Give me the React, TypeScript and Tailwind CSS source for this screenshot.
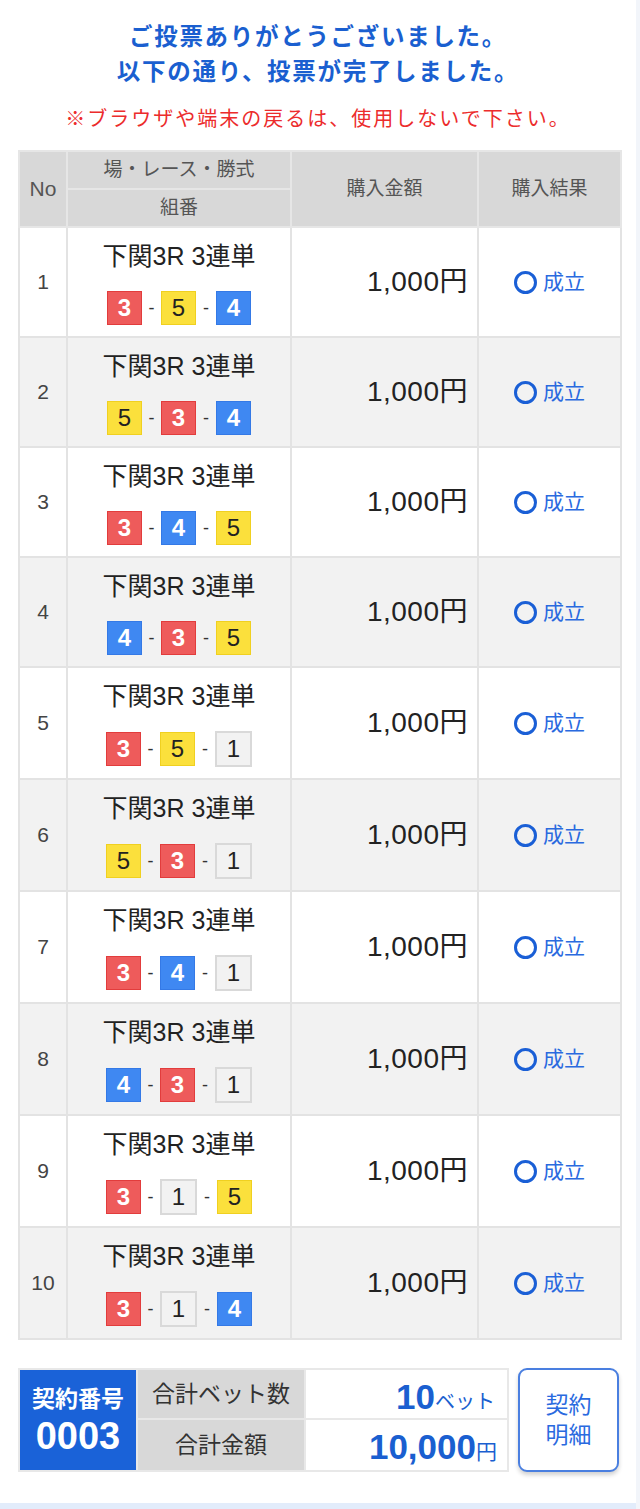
import React from "react";

type Color = 1 | 3 | 4 | 5;

const rows: { combo: Color[] }[] = [
  { combo: [3, 5, 4] },
  { combo: [5, 3, 4] },
  { combo: [3, 4, 5] },
  { combo: [4, 3, 5] },
  { combo: [3, 5, 1] },
  { combo: [5, 3, 1] },
  { combo: [3, 4, 1] },
  { combo: [4, 3, 1] },
  { combo: [3, 1, 5] },
  { combo: [3, 1, 4] },
];

function Box({ n }: { n: Color }) {
  if (n === 3)
    return (
      <span className="inline-flex w-[35px] h-[34px] items-center justify-center bg-[#ee5b5b] border border-[#e23c3c] text-white font-bold text-[24px] leading-none">
        3
      </span>
    );
  if (n === 5)
    return (
      <span className="inline-flex w-[35px] h-[34px] items-center justify-center bg-[#fbe03c] border border-[#f0d020] text-[#222] text-[24px] leading-none">
        5
      </span>
    );
  if (n === 4)
    return (
      <span className="inline-flex w-[35px] h-[34px] items-center justify-center bg-[#3f88f2] border border-[#3479e6] text-white font-bold text-[24px] leading-none">
        4
      </span>
    );
  return (
    <span className="inline-flex w-[37px] h-[36px] items-center justify-center bg-[#f2f2f2] border-2 border-[#d9d9d9] text-[#222] text-[24px] leading-none">
      1
    </span>
  );
}

const th =
  "bg-[#d8d8d8] border-2 border-[#e6e6e6] text-[#555] font-normal text-[19px]";

export default function App() {
  const font = "font-['Liberation_Sans','Noto_Sans_CJK_JP',sans-serif]";
  return (
    <div className={`w-[640px] h-[1509px] bg-white flex ${font}`}>
      <div className="w-[636px] flex flex-col">
        <div className="pt-[20px] text-center text-[#1a5fd0] font-bold text-[23.5px] leading-[35px] tracking-[1.7px]">
          <div>ご投票ありがとうございました。</div>
          <div>以下の通り、投票が完了しました。</div>
        </div>
        <div className="mt-[14px] text-center text-[#ec2c2c] text-[20px] leading-[30px] tracking-[2px]">
          ※ブラウザや端末の戻るは、使用しないで下さい。
        </div>
        <div className="mt-[16px] ml-[18px] w-[602px]">
          <table className="w-[602px] table-fixed border-collapse">
            <colgroup>
              <col className="w-[48px]" />
              <col className="w-[224px]" />
              <col className="w-[187px]" />
              <col className="w-[143px]" />
            </colgroup>
            <thead>
              <tr className="h-[38px]">
                <th rowSpan={2} className={`${th} text-[21px]`}>
                  No
                </th>
                <th className={th}>場・レース・勝式</th>
                <th rowSpan={2} className={th}>
                  購入金額
                </th>
                <th rowSpan={2} className={th}>
                  購入結果
                </th>
              </tr>
              <tr className="h-[38px]">
                <th className={th}>組番</th>
              </tr>
            </thead>
            <tbody>
              {rows.map((r, i) => {
                const even = i % 2 === 1;
                const hasWhite = r.combo.includes(1);
                return (
                  <tr
                    key={i}
                    className={`${even ? "bg-[#f2f2f2]" : "bg-white"} ${
                      hasWhite ? "h-[112px]" : "h-[110px]"
                    }`}
                  >
                    <td className="border-2 border-[#e3e3e3] text-center text-[21px] text-[#444]">
                      {i + 1}
                    </td>
                    <td className="border-2 border-[#e3e3e3] text-center align-top pt-[13px]">
                      <div className="text-[25px] leading-[30px] text-[#222]">
                        下関3R 3連単
                      </div>
                      <div className="mt-[20px] flex items-center justify-center">
                        <Box n={r.combo[0]} />
                        <span className="w-[19px] text-center text-[#333] text-[18px] leading-none">
                          -
                        </span>
                        <Box n={r.combo[1]} />
                        <span className="w-[20px] text-center text-[#333] text-[18px] leading-none">
                          -
                        </span>
                        <Box n={r.combo[2]} />
                      </div>
                    </td>
                    <td className="border-2 border-[#e3e3e3] text-right pr-[9px] text-[28px] tracking-[0.5px] text-[#222]">
                      1,000円
                    </td>
                    <td className="border-2 border-[#e3e3e3]">
                      <div className="flex items-center justify-center gap-[6px]">
                        <span className="inline-block w-[23px] h-[23px] rounded-full border-[3px] border-[#1a5fd6]" />
                        <span className="text-[21px] text-[#2a6adf]">成立</span>
                      </div>
                    </td>
                  </tr>
                );
              })}
            </tbody>
          </table>
        </div>

        <div className="mt-[28px] ml-[18px] flex items-stretch h-[104px]">
          <div className="flex border-2 border-[#e8e8e8]">
            <div className="w-[116px] bg-[#1a62d8] flex flex-col items-center justify-center text-white font-bold">
              <div className="text-[23px] leading-[32px]">契約番号</div>
              <div className="text-[38px] leading-[42px]">0003</div>
            </div>
            <div className="flex flex-col">
              <div className="flex h-[50px] border-b-2 border-[#e8e8e8]">
                <div className="w-[170px] bg-[#d8d8d8] border-x-2 border-[#e8e8e8] flex items-center justify-center text-[23px] text-[#333]">
                  合計ベット数
                </div>
                <div className="w-[201px] bg-white flex items-baseline justify-end pr-[12px] pt-[9px] text-[#1a5fd0]">
                  <span className="text-[35px] font-bold leading-none">10</span>
                  <span className="text-[20px] leading-none">ベット</span>
                </div>
              </div>
              <div className="flex flex-1">
                <div className="w-[170px] bg-[#d8d8d8] border-x-2 border-[#e8e8e8] flex items-center justify-center text-[23px] text-[#333]">
                  合計金額
                </div>
                <div className="w-[201px] bg-white flex items-baseline justify-end pr-[10px] pt-[9px] text-[#1a5fd0]">
                  <span className="text-[35px] font-bold leading-none">10,000</span>
                  <span className="text-[21px] leading-none">円</span>
                </div>
              </div>
            </div>
          </div>
          <div className="ml-[9px] w-[101px] rounded-[9px] border-2 border-[#4a7fe0] bg-white shadow-[0_3px_4px_rgba(0,0,0,0.18)] flex flex-col items-center justify-center text-[#2a6adf] text-[23px] leading-[30px]">
            <div>契約</div>
            <div>明細</div>
          </div>
        </div>

        <div className="flex-1" />
        <div className="h-[6px] bg-[#e2ecfb]" />
      </div>
      <div className="w-[4px] bg-[#f2f5fa]" />
    </div>
  );
}
